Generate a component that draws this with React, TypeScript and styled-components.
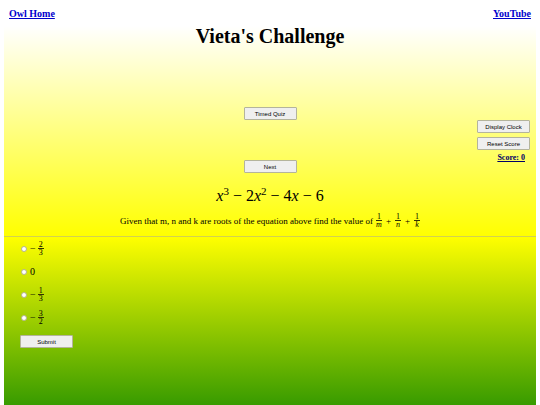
import React from "react";
import styled, { createGlobalStyle } from "styled-components";

const GlobalStyle = createGlobalStyle`
  * { box-sizing: border-box; }
  body {
    margin: 0;
    background: #fff;
    color: #000;
    font-family: "Liberation Serif", "Times New Roman", serif;
  }
`;

const Page = styled.div`
  min-height: 100vh;
  display: flex;
  flex-direction: column;
  padding: 0 4px;
`;

const Nav = styled.nav`
  display: flex;
  justify-content: space-between;
  padding: 8px 5px 6px;
`;

const NavLink = styled.a`
  color: #0000cc;
  font-size: 10px;
  line-height: 12px;
  font-weight: bold;
`;

const Question = styled.main`
  background: linear-gradient(#fff, #ff0);
  border-bottom: 1px solid #d2d250;
`;

const Title = styled.h1`
  margin: 0;
  font-size: 20px;
  line-height: 20px;
  text-align: center;
`;

const Controls = styled.div`
  display: grid;
  grid-template-columns: 1fr auto 1fr;
  margin-top: 61px;
  padding: 0 6px;
`;

const QuizControls = styled.div`
  grid-column: 2;
  display: flex;
  flex-direction: column;
  gap: 40px;
`;

const ScoreControls = styled.div`
  display: flex;
  flex-direction: column;
  align-items: flex-end;
  gap: 4px;
  padding-top: 13px;
`;

const Button = styled.button`
  width: 53px;
  height: 13px;
  padding: 0;
  border: 1px solid #b4b49c;
  border-radius: 1px;
  background: #efefef;
  color: #000;
  font: 6px/10px "Liberation Sans", Arial, sans-serif;
`;

const Score = styled.output`
  padding-right: 5px;
  color: #000066;
  font-size: 8px;
  line-height: 8px;
  font-weight: bold;
  text-decoration: underline;
`;

const Equation = styled.p`
  margin: 13px 0 0;
  font-size: 16px;
  line-height: 20px;
  text-align: center;
  white-space: pre;
`;

const Power = styled.sup`
  font-size: 11px;
  line-height: 0;
  vertical-align: 6px;
`;

const Prompt = styled.p`
  display: flex;
  justify-content: center;
  align-items: center;
  gap: 3px;
  margin: 7px 0 8px;
  font-size: 9px;
  line-height: 12px;
`;

const Sum = styled.span`
  display: flex;
  align-items: center;
  gap: 4px;
`;

const FractionBox = styled.span<{ $italic?: boolean }>`
  display: inline-flex;
  flex-direction: column;
  align-items: center;
  min-width: 6px;
  font-size: 8px;
  line-height: 7px;

  span:last-child {
    border-top: 1px solid #333300;
    align-self: stretch;
    text-align: center;
    font-style: ${(p) => (p.$italic ? "italic" : "normal")};
  }
`;

const Answers = styled.form`
  flex: 1;
  display: flex;
  flex-direction: column;
  align-items: flex-start;
  padding: 0 16px;
  background: linear-gradient(#ff0, #389b00);
`;

const Answer = styled.label`
  display: flex;
  align-items: center;
  gap: 3px;
  height: 23px;
  font-size: 10px;
`;

const Radio = styled.input`
  appearance: none;
  width: 6px;
  height: 6px;
  margin: 0 0 0 1px;
  border: 1px solid #b4b48c;
  border-radius: 50%;
  background: #fff;

  &:checked { background: #0075ff; }
`;

const AnswerValue = styled.span`
  display: flex;
  align-items: center;
  gap: 2px;
`;

const Submit = styled(Button)`
  margin-top: 6px;
`;

const Fraction = ({ top, bottom, italic }: { top: string; bottom: string; italic?: boolean }) => (
  <FractionBox $italic={italic}>
    <span>{top}</span>
    <span>{bottom}</span>
  </FractionBox>
);

const choices: { id: string; top?: string; bottom?: string; whole?: string }[] = [
  { id: "a", top: "2", bottom: "3" },
  { id: "b", whole: "0" },
  { id: "c", top: "1", bottom: "3" },
  { id: "d", top: "3", bottom: "2" },
];

export default function App() {
  return (
    <>
      <GlobalStyle />
      <Page>
        <Nav>
          <NavLink href="#home">Owl Home</NavLink>
          <NavLink href="#youtube">YouTube</NavLink>
        </Nav>
        <Question>
          <Title>Vieta's Challenge</Title>
          <Controls>
            <QuizControls>
              <Button type="button">Timed Quiz</Button>
              <Button type="button">Next</Button>
            </QuizControls>
            <ScoreControls>
              <Button type="button">Display Clock</Button>
              <Button type="button">Reset Score</Button>
              <Score>Score: 0</Score>
            </ScoreControls>
          </Controls>
          <Equation>
            <i>x</i><Power>3</Power> − 2<i>x</i><Power>2</Power> − 4<i>x</i> − 6
          </Equation>
          <Prompt>
            <span>Given that m, n and k are roots of the equation above find the value of</span>
            <Sum>
              <Fraction top="1" bottom="m" italic />
              <span>+</span>
              <Fraction top="1" bottom="n" italic />
              <span>+</span>
              <Fraction top="1" bottom="k" italic />
            </Sum>
          </Prompt>
        </Question>
        <Answers onSubmit={(e) => e.preventDefault()}>
          {choices.map((c) => (
            <Answer key={c.id}>
              <Radio type="radio" name="answer" value={c.id} />
              <AnswerValue>
                {c.whole ?? (
                  <>
                    <span>−</span>
                    <Fraction top={c.top!} bottom={c.bottom!} />
                  </>
                )}
              </AnswerValue>
            </Answer>
          ))}
          <Submit type="submit">Submit</Submit>
        </Answers>
      </Page>
    </>
  );
}
